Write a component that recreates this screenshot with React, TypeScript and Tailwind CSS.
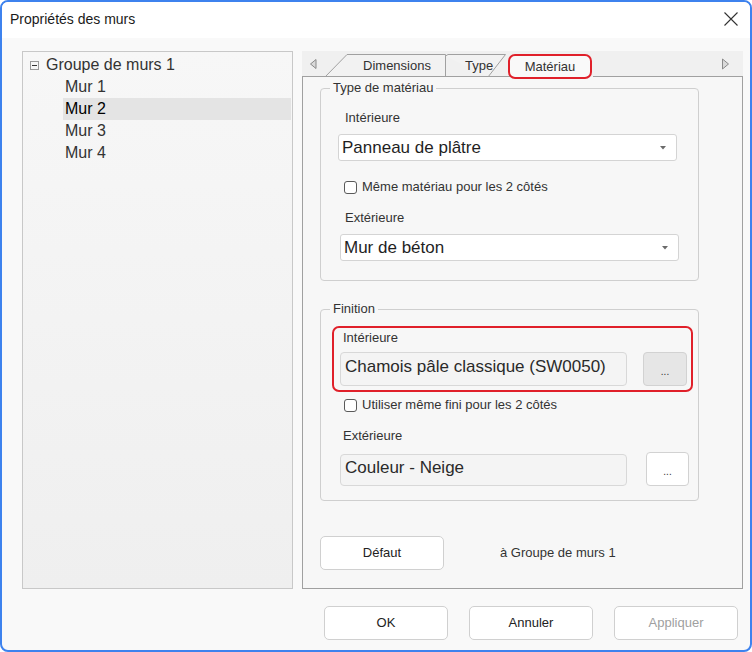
import React from 'react';

const font = { fontFamily: '"Liberation Sans", Arial, sans-serif' };

const Caret = () => (
  <svg width="6" height="4" viewBox="0 0 6 4" className="shrink-0">
    <path d="M0 0 L6 0 L3 3.5 Z" fill="#6b6b6b" />
  </svg>
);

const Check = ({ label }: { label: string }) => (
  <div className="flex items-center h-[16px] ml-[23px]">
    <span className="w-[13px] h-[13px] rounded-[3px] border border-[#5a5a5a] bg-white" />
    <span className="ml-[5px] text-[13px] leading-[16px] text-[#333]">{label}</span>
  </div>
);

const Group = ({ title, children, className }: { title: string; children: React.ReactNode; className?: string }) => (
  <div className={`border border-[#cfcfcf] rounded-[4px] w-[379px] ${className ?? ''}`}>
    <div className="-mt-[9px] ml-[9px] px-[3px] w-fit bg-[#f7f7f7] text-[13px] leading-[16px] text-[#333]">{title}</div>
    {children}
  </div>
);

const Combo = ({ value, className }: { value: string; className?: string }) => (
  <div className={`h-[27px] w-[339px] bg-white border border-[#d4d4d4] rounded-[3px] flex items-center justify-between pl-[3px] pr-[10px] ${className ?? ''}`}>
    <span className="text-[17px] leading-[20px] text-[#1f1f1f]">{value}</span>
    <Caret />
  </div>
);

const Tree = () => {
  const items = ['Mur 1', 'Mur 2', 'Mur 3', 'Mur 4'];
  return (
    <div className="w-[271px] h-[538px] border border-[#c8c8c8] bg-gradient-to-b from-[#f7f7f7] to-[#efefef] pt-[2px] pr-[1px]">
      <div className="flex items-center h-[22px] pl-[7px]">
        <svg width="9" height="9" viewBox="0 0 9 9">
          <rect x="0.5" y="0.5" width="8" height="8" fill="none" stroke="#9a9a9a" />
          <path d="M2 4.5 H7" stroke="#333" />
        </svg>
        <span className="ml-[7px] text-[16px] leading-[22px] text-[#333]">Groupe de murs 1</span>
      </div>
      {items.map((it) => (
        <div
          key={it}
          className={`h-[22px] ml-[40px] pl-[2px] text-[16px] leading-[22px] ${it === 'Mur 2' ? 'bg-[#e4e4e4] text-black' : 'text-[#333]'}`}
        >
          {it}
        </div>
      ))}
    </div>
  );
};

const TabStrip = () => (
  <div className="relative h-[26px] bg-[#f0f0f0] flex items-stretch">
    <svg className="absolute inset-0" width="441" height="26" viewBox="0 0 441 26">
      <path d="M23 26 L45 3.5 H143.5 V26" fill="#f2f2f2" stroke="#a0a0a0" />
      <path d="M143.5 5 L146 3.5 H203.5 L186 26" fill="#f2f2f2" stroke="#a0a0a0" />
      <path d="M0 25.5 H208 M291 25.5 H441" stroke="#a0a0a0" />
      <path d="M14 8.5 L8.5 13 L14 17.5 Z" fill="#d9d9d9" stroke="#8a8a8a" />
      <path d="M420.5 8 L426.5 13 L420.5 18 Z" fill="#d9d9d9" stroke="#8a8a8a" />
    </svg>
    <div className="w-[47px]" />
    <div className="relative w-[96px] flex items-center justify-center pt-[4px] text-[13px] text-[#333]">Dimensions</div>
    <div className="relative w-[63px] flex items-center pl-[20px] pt-[4px] text-[13px] text-[#333]">Type</div>
    <div className="relative mt-[3px] -mb-[2px] w-[84px] h-[25px] border-2 border-[#e0202a] rounded-[7px] bg-[#f9f9f9] flex items-center justify-center pt-[1px] text-[13px] text-[#333]">
      Matériau
    </div>
  </div>
);

const Btn = ({ label, className, muted }: { label: string; className?: string; muted?: boolean }) => (
  <div className={`h-[34px] w-[124px] bg-white border border-[#d0d0d0] rounded-[5px] flex items-center justify-center text-[13px] ${muted ? 'text-[#a0a0a0]' : 'text-[#222]'} ${className ?? ''}`}>
    {label}
  </div>
);

const App = () => {
  return (
    <div style={font} className="w-[752px] h-[652px] border-2 border-[#3d82ee] rounded-[8px] overflow-hidden flex flex-col bg-[#f9f9f9]">
      <div className="h-[36px] bg-white flex items-center justify-between pl-[8px] pr-[12px] shrink-0">
        <span className="text-[14px] text-[#1a1a1a] -mt-[2px]">Propriétés des murs</span>
        <svg width="14" height="14" viewBox="0 0 14 14" className="-mt-[2px]">
          <path d="M0.5 0.5 L13.5 13.5 M13.5 0.5 L0.5 13.5" stroke="#333" strokeWidth="1.1" />
        </svg>
      </div>

      <div className="flex-1 flex flex-col">
        <div className="flex gap-[9px] pl-[20px] pt-[13px]">
          <Tree />
          <div className="w-[441px] h-[538px] flex flex-col">
            <TabStrip />
            <div className="flex-1 border-l border-r border-b border-[#a0a0a0] bg-[#f7f7f7] pl-[17px] pt-[11px]">
              <Group title="Type de matériau" className="pb-[19px]">
                <div className="mt-[14px] ml-[24px] text-[13px] leading-[16px] text-[#333]">Intérieure</div>
                <Combo value="Panneau de plâtre" className="mt-[8px] ml-[17px]" />
                <div className="mt-[18px]">
                  <Check label="Même matériau pour les 2 côtés" />
                </div>
                <div className="mt-[15px] ml-[24px] text-[13px] leading-[16px] text-[#333]">Extérieure</div>
                <Combo value="Mur de béton" className="mt-[8px] ml-[19px]" />
              </Group>

              <Group title="Finition" className="mt-[28px] pb-[14px]">
                <div className="mt-[9px] ml-[11px] w-[361px] h-[66px] border-2 border-[#e0202a] rounded-[7px] pl-[9px] pt-[2px]">
                  <div className="text-[13px] leading-[16px] text-[#333]">Intérieure</div>
                  <div className="mt-[6px] flex gap-[16px] -ml-[3px]">
                    <div className="w-[287px] h-[34px] bg-[#f4f4f4] border border-[#d8d8d8] rounded-[4px] px-[4px] pt-[4px] text-[17px] leading-[20px] text-[#2a2a2a]">
                      Chamois pâle classique (SW0050)
                    </div>
                    <div className="w-[44px] h-[34px] bg-[#e6e6e6] border border-[#d2d2d2] rounded-[4px] flex items-end justify-center pb-[8px] text-[10px] leading-[10px] text-[#333]">
                      ...
                    </div>
                  </div>
                </div>
                <div className="mt-[5px]">
                  <Check label="Utiliser même fini pour les 2 côtés" />
                </div>
                <div className="mt-[15px] ml-[22px] text-[13px] leading-[16px] text-[#333]">Extérieure</div>
                <div className="mt-[8px] ml-[19px] flex items-end gap-[19px]">
                  <div className="w-[287px] h-[32px] bg-[#f4f4f4] border border-[#d8d8d8] rounded-[4px] px-[4px] pt-[3px] text-[17px] leading-[20px] text-[#2a2a2a]">
                    Couleur - Neige
                  </div>
                  <div className="w-[43px] h-[34px] bg-white border border-[#d2d2d2] rounded-[4px] flex items-end justify-center pb-[8px] text-[10px] leading-[10px] text-[#333]">
                    ...
                  </div>
                </div>
              </Group>

              <div className="mt-[35px] flex items-center">
                <Btn label="Défaut" />
                <span className="ml-[56px] text-[13px] text-[#333]">à Groupe de murs 1</span>
              </div>
            </div>
          </div>
        </div>

        <div className="mt-[17px] flex justify-end gap-[21px] pr-[12px]">
          <Btn label="OK" />
          <Btn label="Annuler" />
          <Btn label="Appliquer" muted />
        </div>
      </div>
    </div>
  );
};

export default App;
